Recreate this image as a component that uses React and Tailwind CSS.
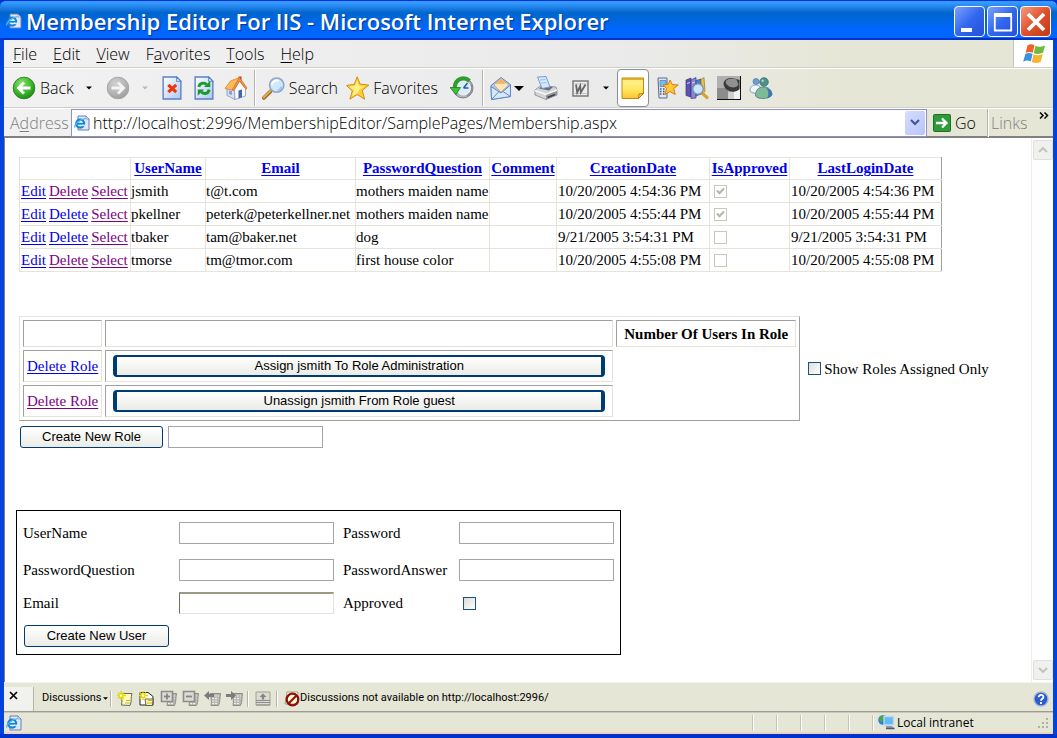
import React from "react";

const users = [
  { name: "jsmith", email: "t@t.com", question: "mothers maiden name", created: "10/20/2005 4:54:36 PM", approved: true, login: "10/20/2005 4:54:36 PM", deleteVisited: true },
  { name: "pkellner", email: "peterk@peterkellner.net", question: "mothers maiden name", created: "10/20/2005 4:55:44 PM", approved: true, login: "10/20/2005 4:55:44 PM", deleteVisited: false },
  { name: "tbaker", email: "tam@baker.net", question: "dog", created: "9/21/2005 3:54:31 PM", approved: false, login: "9/21/2005 3:54:31 PM", deleteVisited: false },
  { name: "tmorse", email: "tm@tmor.com", question: "first house color", created: "10/20/2005 4:55:08 PM", approved: false, login: "10/20/2005 4:55:08 PM", deleteVisited: true },
];

const columns = [
  { label: "", width: "w-[111px]" },
  { label: "UserName", width: "w-[75px]" },
  { label: "Email", width: "w-[150px]" },
  { label: "PasswordQuestion", width: "w-[134px]" },
  { label: "Comment", width: "w-[67px]" },
  { label: "CreationDate", width: "w-[153px]" },
  { label: "IsApproved", width: "w-[80px]" },
  { label: "LastLoginDate", width: "w-[152px]" },
];

const roles = [
  { text: "Assign jsmith To Role Administration", visited: false },
  { text: "Unassign jsmith From Role guest", visited: true },
];

/* ---------- icons ---------- */

function IePage({ className }) {
  return (
    <svg viewBox="0 0 16 16" className={className} aria-hidden="true">
      <path d="M4 1h8l3 3v11H4z" fill="#dfe8fb" stroke="#6b7fb5" />
      <path d="M12 1v3h3z" fill="#fff" stroke="#6b7fb5" strokeWidth=".7" />
      <circle cx="6.200" cy="8.600" r="4" fill="#e4f2ff" stroke="#1583d8" strokeWidth="2.100" />
      <path d="M3 8.800h7.500" stroke="#1583d8" strokeWidth="1.800" />
      <path d="M8 10.400h4" stroke="#dfe8fb" strokeWidth="1.500" />
      <path d="M.8 12.600C0 10 5 4.500 11.500 3.600" fill="none" stroke="#49b3f5" strokeWidth="1.200" />
    </svg>
  );
}

function WindowsFlag() {
  return (
    <svg viewBox="0 0 24 22" className="h-[22px] w-6" aria-hidden="true">
      <path d="M5.500 2.500C8 1 10 1 12.500 2.300L10.800 9.800C8.500 8.600 6 8.700 3.600 10z" fill="#f0602a" />
      <path d="M13.500 2.800C16 4 19 4.200 23 2.200L21 9.800C17.500 11.300 14.500 11.300 11.800 10z" fill="#6fba3a" />
      <path d="M3.300 11C6 9.700 8.300 9.900 10.600 11L8.800 18.500C6.500 17.200 4 17.300 1.200 18.700z" fill="#3f8fe0" />
      <path d="M11.600 11.300C14 12.500 17 12.500 20.700 11L18.800 18.800C15.500 20.400 12.500 20.300 9.800 19z" fill="#f6b52c" />
    </svg>
  );
}

function ArrowBall({ forward }) {
  return (
    <svg viewBox="0 0 24 24" className="size-6" aria-hidden="true">
      <defs>
        <radialGradient id={forward ? "ballGrey" : "ballGreen"} cx=".4" cy=".3" r=".75">
          <stop offset="0" stopColor={forward ? "#d0d0d0" : "#8be36e"} />
          <stop offset=".6" stopColor={forward ? "#b5b5b5" : "#3cb52c"} />
          <stop offset="1" stopColor={forward ? "#9a9a9a" : "#1d8416"} />
        </radialGradient>
      </defs>
      <circle cx="12" cy="12" r="10.800" fill={forward ? "url(#ballGrey)" : "url(#ballGreen)"} stroke={forward ? "#a8a8a8" : "#2a8a20"} />
      {forward ? (
        <path d="M5.500 12h12M12 6.500l5.500 5.500-5.500 5.500" fill="none" stroke="#f4f4f4" strokeWidth="2.800" />
      ) : (
        <path d="M18.500 12h-12M12 6.500L6.500 12l5.500 5.500" fill="none" stroke="#fff" strokeWidth="2.800" />
      )}
    </svg>
  );
}

function PageShape() {
  return (
    <>
      <path d="M1 1h13l4 4v17H1z" fill="url(#pageFill)" stroke="#5b7fc4" strokeWidth="1.300" />
      <path d="M14 1v4h4z" fill="#fff" stroke="#5b7fc4" />
    </>
  );
}

function StopIcon() {
  return (
    <svg viewBox="0 0 19 23" className="h-6 w-5" aria-hidden="true">
      <defs>
        <linearGradient id="pageFill" x1="0" y1="0" x2="1" y2="1">
          <stop offset="0" stopColor="#fff" />
          <stop offset="1" stopColor="#aac8f3" />
        </linearGradient>
      </defs>
      <PageShape />
      <path d="M6 8.500l7.500 7M13.500 8.500L6 15.500" stroke="#f0350c" strokeWidth="3" />
    </svg>
  );
}

function RefreshIcon() {
  return (
    <svg viewBox="0 0 19 23" className="h-6 w-5" aria-hidden="true">
      <PageShape />
      <path d="M4.500 10.500C5.500 6.500 9 6 12 8" fill="none" stroke="#18992a" strokeWidth="2.800" />
      <path d="M9.500 10.500h6v-6z" fill="#18992a" />
      <path d="M14.500 13C13.500 17 10 17.800 7 15.500" fill="none" stroke="#18992a" strokeWidth="2.800" />
      <path d="M9.500 13h-6v6z" fill="#18992a" />
    </svg>
  );
}

function HomeIcon() {
  return (
    <svg viewBox="0 0 24 24" className="size-6" aria-hidden="true">
      <path d="M14.500.5h3V6h-3z" fill="#c23a2c" />
      <path d="M3 13l8-1v11.500l-8-4z" fill="#d7deee" stroke="#8a96b8" strokeWidth=".8" />
      <path d="M10.500 13l5-8 6 7.500V20L11 23.500z" fill="#fafbff" stroke="#8a96b8" strokeWidth=".8" />
      <path d="M14.500 14.500l3.500-1v7.800l-3.500 1.200z" fill="#3f66b5" />
      <path d="M5 14.500l3 .5v4l-3-1z" fill="#7fa6e0" />
      <path d="M1 12.500L6.500 5l9-3.500L9.500 12.500 8 14z" fill="#ffb85c" stroke="#dd8528" strokeWidth=".8" />
      <path d="M8 14l7.500-12.500L23 12l-1.200 1.300L15.500 5l-5.500 9.500z" fill="#f2954a" stroke="#c96a18" strokeWidth=".7" />
    </svg>
  );
}

function SearchIcon() {
  return (
    <svg viewBox="0 0 24 24" className="size-6" aria-hidden="true">
      <path d="M9 15.500l-7 7" stroke="#9c6a28" strokeWidth="4" strokeLinecap="round" />
      <path d="M8.800 15l-7 7" stroke="#f0a84a" strokeWidth="2" strokeLinecap="round" />
      <circle cx="15.500" cy="9" r="7.500" fill="#cfe8fc" stroke="#8fa5c6" strokeWidth="1.700" />
      <path d="M10.500 8.500a5.200 5.200 0 0 1 7-4" fill="none" stroke="#fff" strokeWidth="2.200" />
      <path d="M20.500 10.500a5 5 0 0 1-4 4" fill="none" stroke="#8fc6f3" strokeWidth="1.800" />
    </svg>
  );
}

function StarIcon() {
  return (
    <svg viewBox="0 0 24 24" className="size-6" aria-hidden="true">
      <path d="M11.500.5l3 7.500 9 1-6.800 5.500 2.500 9-7.700-4.800L4 23.500l2.500-8.500L.5 9.500l8-1.300z" fill="#ffcf38" stroke="#c98d14" />
      <path d="M11.500 4l1.700 6 6 .5-5.500 3L12 17.500 6 20.500l2.500-6-5-4 6-.5z" fill="#ffee8a" />
    </svg>
  );
}

function HistoryIcon() {
  return (
    <svg viewBox="0 0 24 24" className="size-6" aria-hidden="true">
      <circle cx="13" cy="12" r="10" fill="#b0b5bb" stroke="#7d838d" />
      <circle cx="13.500" cy="12" r="7" fill="#d8ecfb" stroke="#f4f4f4" />
      <path d="M13.500 12l4-5M13.500 12h5" stroke="#2a5aa0" strokeWidth="1.500" />
      <path d="M19.500 5C14-.5 5.500 3 4.800 11" fill="none" stroke="#2f9e2c" strokeWidth="4" />
      <path d="M0 11.500h10.500L6 18.500z" fill="#3fbf35" stroke="#1c7d1b" strokeWidth=".8" />
      <path d="M21 8a9 9 0 0 1-4 12" fill="none" stroke="#8b9098" strokeWidth="1.500" />
    </svg>
  );
}

function MailIcon() {
  return (
    <svg viewBox="0 0 22 24" className="h-6 w-[22px]" aria-hidden="true">
      <path d="M1 9.500L11 1.500l9.500 7V20.500L1.500 23.500z" fill="#a9cbf4" stroke="#5f88c9" />
      <path d="M4 9l7-6.500L18.500 9l-7.500 7z" fill="#ffe6b8" stroke="#d29c50" strokeWidth=".7" />
      <path d="M5.500 8l5.500-5 5 4.500z" fill="#f3b160" />
      <path d="M1 10.500L11 17l9.500-8v11.500L1.500 23.500z" fill="#d7e8fc" stroke="#5f88c9" />
      <path d="M1.500 23.500L9 15.500M20.500 20.500L13 15.500" stroke="#5f88c9" />
    </svg>
  );
}

function PrinterIcon() {
  return (
    <svg viewBox="0 0 24 24" className="size-6" aria-hidden="true">
      <path d="M1 14l6-4.500 15 1.500 1 3v5l-11 4.500L1 19z" fill="#d2d4d7" stroke="#83868c" strokeWidth=".8" />
      <path d="M5 12.500l3-2.500 11 1-4 3.500z" fill="#6b6e75" />
      <path d="M3.500 1L12 .5l4 10.500-8 1.500z" fill="#d2e8fd" stroke="#6d93c6" strokeWidth=".9" />
      <path d="M6 4l5.500-.5M7 7l5.500-.5" stroke="#9dc2ea" />
      <path d="M1 14.500l11 4 11-4.500" fill="none" stroke="#f8f8f8" strokeWidth="1.400" />
      <path d="M12 19v4.500l11-4.500v-4z" fill="#94979d" />
      <path d="M13.500 21.500l7.500-3" stroke="#3f4248" strokeWidth="1.600" />
    </svg>
  );
}

function WordIcon() {
  return (
    <svg viewBox="0 0 17 17" className="size-[17px]" aria-hidden="true">
      <path d="M1 1h15v15H1z" fill="#ececec" stroke="#7c7c7c" strokeWidth="1.500" />
      <path d="M2.500 4h12M2.500 13.500h12" stroke="#c4c4c4" />
      <path d="M4 4.500l1.200 8 3-6.500.6 6.500L13.500 4.500" fill="none" stroke="#666" strokeWidth="1.800" />
    </svg>
  );
}

function NoteIcon() {
  return (
    <svg viewBox="0 0 24 24" className="size-6" aria-hidden="true">
      <defs>
        <linearGradient id="noteFill" x1="0" y1="0" x2="0" y2="1">
          <stop offset="0" stopColor="#ffe45c" />
          <stop offset=".2" stopColor="#fff08c" />
          <stop offset=".55" stopColor="#ffe860" />
          <stop offset="1" stopColor="#fcc22e" />
        </linearGradient>
      </defs>
      <path d="M1 2h21.500v15.500L17.500 22.500H1z" fill="url(#noteFill)" stroke="#c08a10" />
      <path d="M1 3h21" stroke="#d8a018" strokeWidth="1.500" />
      <path d="M17.500 22.500l.5-4.500 4.500-.5z" fill="#f0cf62" stroke="#9c6c08" strokeWidth=".8" />
    </svg>
  );
}

function MobileStarIcon() {
  return (
    <svg viewBox="0 0 22 22" className="size-[22px]" aria-hidden="true">
      <path d="M1 1h9v20H2z" fill="#dfe6f2" stroke="#5a6a8a" />
      <path d="M3 3.500h6v6H3z" fill="#6fc0f2" stroke="#4a6aa0" strokeWidth=".6" />
      <path d="M3 12h1.500M6 12h1.500M3 14.500h1.500M6 14.500h1.500M3 17h1.500M6 17h1.500" stroke="#4a5468" strokeWidth="1.300" />
      <path d="M13 3l2.200 4.500 6 .5-4.500 3.500 1.500 6-5.200-3-5 3 1.500-6L6 8l5-.5z" fill="#ffc934" stroke="#d9781c" />
    </svg>
  );
}

function ResearchIcon() {
  return (
    <svg viewBox="0 0 24 24" className="size-6" aria-hidden="true">
      <path d="M1 4l5-2v19l-5-1.500z" fill="#5b55b0" stroke="#3a3680" strokeWidth=".7" />
      <path d="M6 4l5-2.500V22l-5 .5z" fill="#8a86d2" stroke="#3a3680" strokeWidth=".7" />
      <path d="M11 4.500L16 3v15l-5 2z" fill="#4a7fd0" stroke="#2d4f90" strokeWidth=".7" />
      <path d="M16 3.500l3-2 1 14-4 3z" fill="#e8c052" stroke="#9c7818" strokeWidth=".7" />
      <path d="M17 17l5 4.500" stroke="#d8a52c" strokeWidth="3.200" strokeLinecap="round" />
      <circle cx="13" cy="13" r="5.200" fill="#cbe7fb" stroke="#7d8fb0" strokeWidth="1.300" />
      <path d="M2 7.500l3-1M7 7l3-1" stroke="#d6d4f6" />
    </svg>
  );
}

function PhotoIcon() {
  return (
    <svg viewBox="0 0 24 24" className="size-6" aria-hidden="true">
      <path d="M0 0h24v24H0z" fill="#111" />
      <path d="M0 0h23v23H0z" fill="#b0b0b0" />
      <path d="M0 12h11v11H0z" fill="#8c8c8c" />
      <path d="M17 13h6v10h-6z" fill="#f2f2f2" />
      <path d="M11 16h6v7h-6z" fill="#cfcfcf" />
      <path d="M6.500 8c0-4 4-6.500 9-6l7 2v9c-4 5-15 3-16-5z" fill="#3a3a3a" />
      <path d="M8.500 6c2-4 7-4 11-2.500l2 5c-2 4.500-11 4-13-2.500z" fill="#909090" />
    </svg>
  );
}

function MessengerIcon() {
  return (
    <svg viewBox="0 0 24 24" className="size-6" aria-hidden="true">
      <circle cx="7" cy="5.500" r="3" fill="#6f9fd0" stroke="#4a78b0" strokeWidth=".7" />
      <path d="M1 15c0-4 2-6 6-6s5 3 5 6l-3 2.500c-4 0-7-1-8-2.500z" fill="#f2f6fa" stroke="#7fa2bd" />
      <circle cx="15" cy="6" r="4.300" fill="#4f8f8c" stroke="#2f6466" strokeWidth=".7" />
      <path d="M6.500 20c0-6 3-9 8-9s8.500 3 8.500 8c-3 4-13 5-16.500 1z" fill="#7dbb98" stroke="#3f7d80" strokeWidth=".8" />
      <path d="M17 12c4 1 6 3 6 7-1 2-3 3-5 3.200 2-3 2-7-1-10.200z" fill="#3c78b8" />
      <circle cx="13.700" cy="4.800" r="1.300" fill="#a8d2c6" />
    </svg>
  );
}

function Caret({ className }) {
  return (
    <svg viewBox="0 0 8 4" className={className} aria-hidden="true">
      <path d="M0 0h8L4 4z" fill="currentColor" />
    </svg>
  );
}

function GoIcon() {
  return (
    <svg viewBox="0 0 18 18" className="size-[18px]" aria-hidden="true">
      <rect x=".5" y=".5" width="17" height="17" rx="1" fill="#2f9a38" stroke="#1f6f28" />
      <path d="M3 9h10.500M9 4.500L13.500 9 9 13.500" fill="none" stroke="#fff" strokeWidth="2.300" />
    </svg>
  );
}

function NewNoteIcon({ page }) {
  return (
    <svg viewBox="0 0 17 17" className="size-[17px]" aria-hidden="true">
      {page ? (
        <path d="M2 2.500h8l5 4V15H2z" fill="#fff" stroke="#222" />
      ) : (
        <path d="M5 3.500h11c-1.500 4 0 8-2 12l-8.500-.5c1-4 0-7-.5-11.500z" fill="#fffbb5" stroke="#666" />
      )}
      {page && <path d="M7 9h8l-.5 6.500H8z" fill="#fff58a" stroke="#444" strokeWidth=".8" />}
      <path d="M5 1v9M1 5.500h9M2 2.500l6 6M8 2.500l-6 6" stroke="#e4d800" strokeWidth="1.300" />
      <circle cx="5" cy="5.500" r="1.300" fill="#fffde0" />
      <path d="M9 13h5M10 10.500h4" stroke="#bdb760" />
    </svg>
  );
}

function GreyNoteIcon({ sign }) {
  return (
    <svg viewBox="0 0 17 17" className="size-[17px]" aria-hidden="true">
      <path d="M6 3.500h10.500c-1 4 0 8-2 12H7c1-4 0-8-1-12z" fill="#b9b9b4" stroke="#8c8c8c" />
      <path d="M8 6h7M8 8.500h6.500M8 11h6M8 13.500h6" stroke="#f0f0e8" strokeDasharray="2 1" />
      {(sign === "plus" || sign === "minus") && (
        <>
          <path d="M1.500 1.500h11v10h-11z" fill="#dcdcd2" stroke="#8c8c8c" strokeWidth="1.600" />
          <path d="M4 6.500h6" stroke="#858585" strokeWidth="1.800" />
        </>
      )}
      {sign === "plus" && <path d="M7 3.500v6" stroke="#858585" strokeWidth="1.800" />}
      {sign === "prev" && <path d="M0 5.500L5 1v3h5v3H5v3z" fill="#7c7c7c" />}
      {sign === "next" && <path d="M10 5.500L5 1v3H0v3h5v3z" fill="#7c7c7c" />}
    </svg>
  );
}

function PaneIcon() {
  return (
    <svg viewBox="0 0 17 17" className="size-[17px]" aria-hidden="true">
      <path d="M1 2h14v13H1z" fill="#dcdcd2" stroke="#a0a09a" />
      <path d="M1 10.500h14M1 12.500h14M1 15h14" stroke="#8c8c8c" />
      <path d="M8 3.500L4.500 7h2.300v2.500h2.400V7h2.300z" fill="#858585" />
    </svg>
  );
}

function BlockedIcon() {
  return (
    <svg viewBox="0 0 16 16" className="size-4" aria-hidden="true">
      <path d="M3 1h11v12H1z" fill="#fffbd0" stroke="#8c8c70" strokeWidth=".8" />
      <circle cx="8.500" cy="8.500" r="5.800" fill="none" stroke="#8e0f0f" strokeWidth="2.200" />
      <path d="M12.500 4.500l-8 8" stroke="#8e0f0f" strokeWidth="2.200" />
    </svg>
  );
}

function IntranetIcon() {
  return (
    <svg viewBox="0 0 17 17" className="size-[17px]" aria-hidden="true">
      <circle cx="5" cy="6" r="4.800" fill="#2f7fd8" />
      <path d="M1 4c2-3 5-3 6-2 0 2-2 2-2 4s-2 2-3 1z" fill="#3fae48" />
      <path d="M6 2.500h9.500V11H6z" fill="#5fbcf6" stroke="#c6d6ea" strokeWidth="1.300" />
      <path d="M8 12h6l2.500 3H8z" fill="#8f9cb0" />
      <path d="M8 14.500h8.500" stroke="#4c5870" strokeWidth="1.500" />
    </svg>
  );
}

/* ---------- chrome parts ---------- */

function VRule({ className }) {
  return <span className={`w-0.5 shrink-0 border-l border-[#b4b4ac] bg-white ${className}`} />;
}

function CaptionButton({ label, tone, children }) {
  return (
    <button
      type="button"
      aria-label={label}
      className={`flex size-[31px] items-center justify-center rounded-[4px] border border-white ${tone}`}
    >
      {children}
    </button>
  );
}

function TitleBar() {
  const blue = "bg-linear-135 from-[#7ba0ff] via-[#3366ee] to-[#2450d8]";
  return (
    <header className="flex h-10 items-center justify-between rounded-t-md border-t border-[#0033cc] bg-linear-to-b from-[#3399ff] from-5% via-[#0066cc] via-30% to-[#0066ff] to-75% px-1.5 shadow-[inset_0_-2px_0_#0033cc]">
      <div className="flex min-w-0 items-center gap-1">
        <IePage className="size-4 shrink-0" />
        <h1 className="truncate text-[22px] leading-8 font-semibold text-white [text-shadow:1px_1px_1px_#003399]">
          Membership Editor For IIS - Microsoft Internet Explorer
        </h1>
      </div>
      <div className="flex shrink-0 gap-0.5 pt-0.5">
        <CaptionButton label="Minimize" tone={blue}>
          <svg viewBox="0 0 20 20" className="size-5"><path d="M1 16h11v4H1z" fill="#fff" /></svg>
        </CaptionButton>
        <CaptionButton label="Maximize" tone={blue}>
          <svg viewBox="0 0 20 20" className="size-5"><path d="M1.800 2v17M18.200 2v17M1 18.500h18" stroke="#fff" strokeWidth="1.800" /><path d="M1 1h18v4H1z" fill="#fff" /></svg>
        </CaptionButton>
        <CaptionButton label="Close" tone="bg-linear-135 from-[#f09a80] via-[#e0512c] to-[#c03a14]">
          <svg viewBox="0 0 20 20" className="size-5"><path d="M2 2l16 16M18 2L2 18" stroke="#fff" strokeWidth="3.800" /></svg>
        </CaptionButton>
      </div>
    </header>
  );
}

const menus = [
  ["", "F", "ile"],
  ["", "E", "dit"],
  ["", "V", "iew"],
  ["F", "a", "vorites"],
  ["", "T", "ools"],
  ["", "H", "elp"],
];

const bar = "bg-linear-to-r from-[#f1f1f1] via-[#eaeaea] via-60% to-[#e6e6d6] to-80%";
const chromeText = "text-base font-light";

function MenuBar() {
  return (
    <nav className={`flex h-7 items-stretch justify-between border-b border-[#cfcfc4] ${bar}`}>
      <div className="flex items-center gap-4 pl-[9px]">
        {menus.map(([a, key, b]) => (
          <button key={key + b} type="button" className={chromeText}>
            {a}
            <span className="underline underline-offset-2">{key}</span>
            {b}
          </button>
        ))}
      </div>
      <div className="flex w-10 items-center justify-center border-l border-[#c4c4b8] bg-white">
        <WindowsFlag />
      </div>
    </nav>
  );
}

function ToolBar() {
  return (
    <div className={`flex h-10 items-center border-t border-b border-t-white border-b-[#cfcfc4] pl-2 ${bar}`}>
      <button type="button" className={`flex w-16 items-center gap-1 ${chromeText}`}><ArrowBall />Back</button>
      <button type="button" aria-label="Back history" className="ml-2.5"><Caret className="h-1 w-1.5" /></button>
      <button type="button" aria-label="Forward" className="ml-3.5"><ArrowBall forward /></button>
      <button type="button" aria-label="Forward history" className="ml-3 text-[#b8b8b8]"><Caret className="h-1 w-1.5" /></button>
      <button type="button" aria-label="Stop" className="ml-3.5"><StopIcon /></button>
      <button type="button" aria-label="Refresh" className="ml-3"><RefreshIcon /></button>
      <button type="button" aria-label="Home" className="ml-2.5"><HomeIcon /></button>
      <VRule className="ml-1.5 h-9" />
      <button type="button" className={`ml-1.5 flex w-[76px] items-center gap-1 ${chromeText}`}><SearchIcon />Search</button>
      <button type="button" className={`ml-2 flex w-[92px] items-center gap-1 ${chromeText}`}><StarIcon />Favorites</button>
      <button type="button" aria-label="History" className="ml-3"><HistoryIcon /></button>
      <VRule className="ml-2 h-9" />
      <button type="button" aria-label="Mail" className="ml-1.5"><MailIcon /></button>
      <button type="button" aria-label="Mail options" className="ml-0.5"><Caret className="h-[5px] w-2.5" /></button>
      <button type="button" aria-label="Print" className="ml-2.5"><PrinterIcon /></button>
      <button type="button" aria-label="Edit with Word" className="ml-3.5"><WordIcon /></button>
      <button type="button" aria-label="Edit options" className="ml-3.5"><Caret className="h-1 w-1.5" /></button>
      <button type="button" aria-label="Discuss" className="ml-2 flex h-[38px] w-8 items-center justify-center rounded-[4px] border border-[#8a8f96] bg-white"><NoteIcon /></button>
      <button type="button" aria-label="Mobile favorites" className="ml-2"><MobileStarIcon /></button>
      <button type="button" aria-label="Research" className="ml-1.5"><ResearchIcon /></button>
      <button type="button" aria-label="Picture" className="ml-2"><PhotoIcon /></button>
      <button type="button" aria-label="Messenger" className="ml-2"><MessengerIcon /></button>
    </div>
  );
}

function AddressBar() {
  return (
    <div className={`flex h-[30px] items-center border-t border-b-2 border-t-white border-b-[#808080] pl-1.5 ${bar}`}>
      <label htmlFor="address" className={`w-[61px] text-[#808080] ${chromeText}`}>
        A<span className="underline underline-offset-2">d</span>dress
      </label>
      <div className="flex h-7 min-w-0 flex-1 items-center border border-[#8f8fc0] bg-white pr-px pl-0.5">
        <IePage className="size-4 shrink-0" />
        <input
          id="address"
          type="text"
          defaultValue="http://localhost:2996/MembershipEditor/SamplePages/Membership.aspx"
          className={`ml-[3px] min-w-0 flex-1 bg-transparent outline-none ${chromeText}`}
        />
        <button type="button" aria-label="Show addresses" className="flex h-6 w-5 items-center justify-center rounded-[2px] bg-linear-to-br from-[#d4deff] to-[#b8c4f8]">
          <svg viewBox="0 0 10 7" className="h-[7px] w-2.5"><path d="M1 1l4 4 4-4" fill="none" stroke="#41599c" strokeWidth="2.200" /></svg>
        </button>
      </div>
      <button type="button" className={`ml-1.5 flex w-[54px] items-center gap-1 ${chromeText}`}><GoIcon />Go</button>
      <VRule className="h-7" />
      <span className={`ml-0.5 w-12 text-[#808080] ${chromeText}`}>Links</span>
      <button type="button" aria-label="More links" className="mr-0.5 flex h-6 w-3 items-start">
        <svg viewBox="0 0 10 7" className="mt-px h-[7px] w-2.5"><path d="M1 .5l3 3-3 3M5.500.5l3 3-3 3" fill="none" stroke="#000" strokeWidth="1.500" /></svg>
      </button>
    </div>
  );
}

/* ---------- page parts ---------- */

function Link({ visited, children }) {
  return (
    <a href="#" className={visited ? "text-[#800080] underline underline-offset-2" : "text-[#0000ee] underline underline-offset-2"}>
      {children}
    </a>
  );
}

function CheckBox({ id, label, checked, disabled }) {
  return (
    <span className="relative inline-flex size-[13px] shrink-0">
      <input
        id={id}
        type="checkbox"
        aria-label={label}
        defaultChecked={checked}
        disabled={disabled}
        className="peer size-[13px] appearance-none border border-[#1c5180] bg-linear-to-br from-[#dcdcd7] to-white disabled:border-[#cac8bb] disabled:bg-none"
      />
      <svg viewBox="0 0 13 13" className="pointer-events-none absolute inset-0 hidden size-[13px] text-[#21a121] peer-checked:block peer-disabled:text-[#b8b6a8]" aria-hidden="true">
        <path d="M3 5.500l2.500 2.700L10 3.500" fill="none" stroke="currentColor" strokeWidth="2.200" />
      </svg>
    </span>
  );
}

function UsersTable() {
  const cell = "border border-[#e6e4da] p-0";
  return (
    <table className="ml-3.5 w-[923px] table-fixed border-collapse border border-[#e6e4da] border-r-[#a0a0a0] border-b-[#a0a0a0] text-[15px] leading-[22px] whitespace-nowrap">
      <colgroup>
        {columns.map((c, i) => <col key={i} className={c.width} />)}
      </colgroup>
      <thead className="leading-[21px]">
        <tr>
          {columns.map((c, i) => (
            <th key={i} scope="col" className="border border-[#e6e4da] p-0 font-bold last:border-r-[#a0a0a0]">
              {c.label && <Link>{c.label}</Link>}
            </th>
          ))}
        </tr>
      </thead>
      <tbody>
        {users.map((u) => (
          <tr key={u.name} className="h-[23px]">
            <td className="border border-[#e6e4da] px-px">
              <span className="flex gap-[3px]">
                <Link>Edit</Link>
                <Link visited={u.deleteVisited}>Delete</Link>
                <Link visited>Select</Link>
              </span>
            </td>
            <td className={cell}>{u.name}</td>
            <td className={cell}>{u.email}</td>
            <td className={cell}>{u.question}</td>
            <td className={cell}></td>
            <td className="border border-[#e6e4da] px-px">{u.created}</td>
            <td className={cell}>
              <span className="flex pl-1">
                <CheckBox label={`${u.name} approved`} checked={u.approved} disabled />
              </span>
            </td>
            <td className="border border-[#e6e4da] border-r-[#a0a0a0] px-px">{u.login}</td>
          </tr>
        ))}
      </tbody>
    </table>
  );
}

const inset = "border border-t-[#a0a0a0] border-l-[#a0a0a0] border-r-[#e6e4da] border-b-[#e6e4da]";

function RolesTable() {
  return (
    <table className="ml-3.5 border-separate border-spacing-[3px] border border-t-[#e6e4da] border-r-[#a0a0a0] border-b-[#a0a0a0] border-l-[#e6e4da] text-[15px] leading-5 whitespace-nowrap">
      <thead>
        <tr className="h-[27px]">
          <th className={`w-[79px] ${inset}`}></th>
          <th className={`w-[508px] ${inset}`}></th>
          <th scope="col" className={`w-[180px] font-bold ${inset}`}>Number Of Users In Role</th>
        </tr>
      </thead>
      <tbody>
        {roles.map((r) => (
          <tr key={r.text} className="h-8">
            <td className={`px-[3px] ${inset}`}><Link visited={r.visited}>Delete Role</Link></td>
            <td className={`px-[7px] ${inset}`}>
              <button
                type="button"
                className="block h-[22px] w-full rounded-[4px] border-x-4 border-y-2 border-[#003c74] bg-linear-to-b from-white to-[#ebebe6] text-center font-['Liberation_Sans',sans-serif] text-[13px] leading-4"
              >
                {r.text}
              </button>
            </td>
          </tr>
        ))}
      </tbody>
    </table>
  );
}

function PushButton({ children, width }) {
  return (
    <button
      type="button"
      className={`h-[22px] rounded-[3px] border border-[#003c74] bg-linear-to-b from-white to-[#ebebe6] font-['Liberation_Sans',sans-serif] text-[13px] leading-[18px] ${width}`}
    >
      {children}
    </button>
  );
}

const field = "h-[22px] w-[155px] border border-[#a5a5a5] bg-white px-1 outline-none";

function UserForm() {
  return (
    <form
      className="ml-[11px] w-fit border border-black px-1.5 pt-[3px] pb-[7px] text-[15px] leading-5"
      onSubmit={(e) => e.preventDefault()}
    >
      <div className="grid grid-cols-[156px_164px_116px_155px] grid-rows-[37px_37px_30px] items-center">
        <label htmlFor="userName">UserName</label>
        <input id="userName" type="text" className={field} />
        <label htmlFor="password">Password</label>
        <input id="password" type="password" className={field} />
        <label htmlFor="question">PasswordQuestion</label>
        <input id="question" type="text" className={field} />
        <label htmlFor="answer">PasswordAnswer</label>
        <input id="answer" type="text" className={field} />
        <label htmlFor="email">Email</label>
        <input id="email" type="text" className="h-[22px] w-[155px] border border-t-2 border-t-[#9c9a86] border-r-[#e6e4da] border-b-[#e6e4da] border-l-[#6f6f60] bg-white px-1 outline-none" />
        <label htmlFor="approved">Approved</label>
        <span className="flex pl-1"><CheckBox id="approved" /></span>
      </div>
      <div className="mt-[7px] flex pl-px">
        <PushButton width="w-[145px]">Create New User</PushButton>
      </div>
    </form>
  );
}

function ScrollBar() {
  const btn = "flex size-5 items-center justify-center rounded-[2px] border border-[#e0e0da] bg-[#f0f0ee]";
  return (
    <div className="flex w-[22px] shrink-0 flex-col items-center justify-between border-l border-[#eeeeea] bg-[#fefefe] py-0.5">
      <button type="button" aria-label="Scroll up" className={btn}>
        <svg viewBox="0 0 10 6" className="h-1.5 w-2.5"><path d="M1 5l4-4 4 4" fill="none" stroke="#c4c4bc" strokeWidth="2" /></svg>
      </button>
      <button type="button" aria-label="Scroll down" className={btn}>
        <svg viewBox="0 0 10 6" className="h-1.5 w-2.5"><path d="M1 1l4 4 4-4" fill="none" stroke="#c4c4bc" strokeWidth="2" /></svg>
      </button>
    </div>
  );
}

function DiscussionBar() {
  return (
    <div className="flex h-[30px] items-center border-t border-b border-t-[#f4f4ec] border-b-[#9c9c94] bg-[#e6e6d6] pt-[3px] font-['Roboto',sans-serif] text-[11px]">
      <button type="button" aria-label="Close discussions" className="flex h-6 w-[30px] items-start border-r border-[#b4b4ac] bg-[#f1f1ee] pt-1 pl-[5px]">
        <svg viewBox="0 0 9 9" className="size-[9px]"><path d="M1 1l7 7M8 1L1 8" stroke="#000" strokeWidth="1.700" /></svg>
      </button>
      <button type="button" className="ml-2 flex w-[68px] items-center gap-0.5">Discussions<Caret className="h-[3px] w-[5px]" /></button>
      <VRule className="h-4" />
      <div className="ml-1 flex gap-[5px]">
        <button type="button" aria-label="Insert discussion"><NewNoteIcon /></button>
        <button type="button" aria-label="Insert discussion about page"><NewNoteIcon page /></button>
        <button type="button" aria-label="Expand all"><GreyNoteIcon sign="plus" /></button>
        <button type="button" aria-label="Collapse all"><GreyNoteIcon sign="minus" /></button>
        <button type="button" aria-label="Previous"><GreyNoteIcon sign="prev" /></button>
        <button type="button" aria-label="Next"><GreyNoteIcon sign="next" /></button>
      </div>
      <VRule className="ml-1 h-4" />
      <button type="button" aria-label="Discussion pane" className="ml-1.5"><PaneIcon /></button>
      <VRule className="ml-1 h-4" />
      <span className="ml-1.5"><BlockedIcon /></span>
      <span className="flex-1">Discussions not available on http://localhost:2996/</span>
      <button type="button" aria-label="Help" className="mr-1">
        <svg viewBox="0 0 16 16" className="size-4">
          <circle cx="8" cy="8" r="7" fill="#2a5bd0" stroke="#a8b4d0" strokeWidth="1.400" />
          <path d="M5.700 6.300c0-3.300 4.900-3 4.700-.2C10.300 7.800 8 7.700 8 9.800M8 11v2" fill="none" stroke="#fff" strokeWidth="1.800" />
        </svg>
      </button>
    </div>
  );
}

function StatusBar() {
  return (
    <footer className="flex h-[22px] items-center border-t border-b-2 border-t-[#c8c8c0] border-b-[#eed3bf] bg-[#e6e6d6] text-xs">
      <span className="flex-1 pl-0.5"><IePage className="size-4" /></span>
      {[1, 2, 3, 4, 5].map((n) => (
        <span key={n} className="h-4 w-6 border-l border-[#c4c4b8] shadow-[inset_1px_0_0_#fff]" />
      ))}
      <span className="flex h-4 w-[165px] items-center gap-0.5 border-l border-[#c4c4b8] pl-[5px] shadow-[inset_1px_0_0_#fff]">
        <IntranetIcon />
        Local intranet
      </span>
      <svg viewBox="0 0 12 12" className="mr-1 size-3" aria-hidden="true">
        <path d="M9 1h2v2H9zM5 5h2v2H5zM9 5h2v2H9zM1 9h2v2H1zM5 9h2v2H5zM9 9h2v2H9z" fill="#b0b0a2" />
      </svg>
    </footer>
  );
}

export default function App() {
  return (
    <div className="flex min-h-screen flex-col bg-[#0033cc] pb-1 font-['Open_Sans',sans-serif] font-normal text-black">
      <TitleBar />
      <div className="flex flex-1 flex-col border-x-4 border-[#0044dd]">
        <MenuBar />
        <ToolBar />
        <AddressBar />
        <div className="flex flex-1 border-l border-[#808080] bg-white">
          <main className="min-w-0 flex-1 pt-[19px] font-['Liberation_Serif',serif]">
            <UsersTable />
            <div className="mt-11 flex items-center gap-2">
              <RolesTable />
              <label className="flex items-center gap-[3px] text-[15px] leading-5">
                <CheckBox />
                Show Roles Assigned Only
              </label>
            </div>
            <div className="mt-[5px] flex items-center gap-[5px] pl-[15px]">
              <PushButton width="w-[143px]">Create New Role</PushButton>
              <input type="text" aria-label="New role name" className={field} />
            </div>
            <div className="mt-[62px]">
              <UserForm />
            </div>
          </main>
          <ScrollBar />
        </div>
        <DiscussionBar />
        <StatusBar />
      </div>
    </div>
  );
}
